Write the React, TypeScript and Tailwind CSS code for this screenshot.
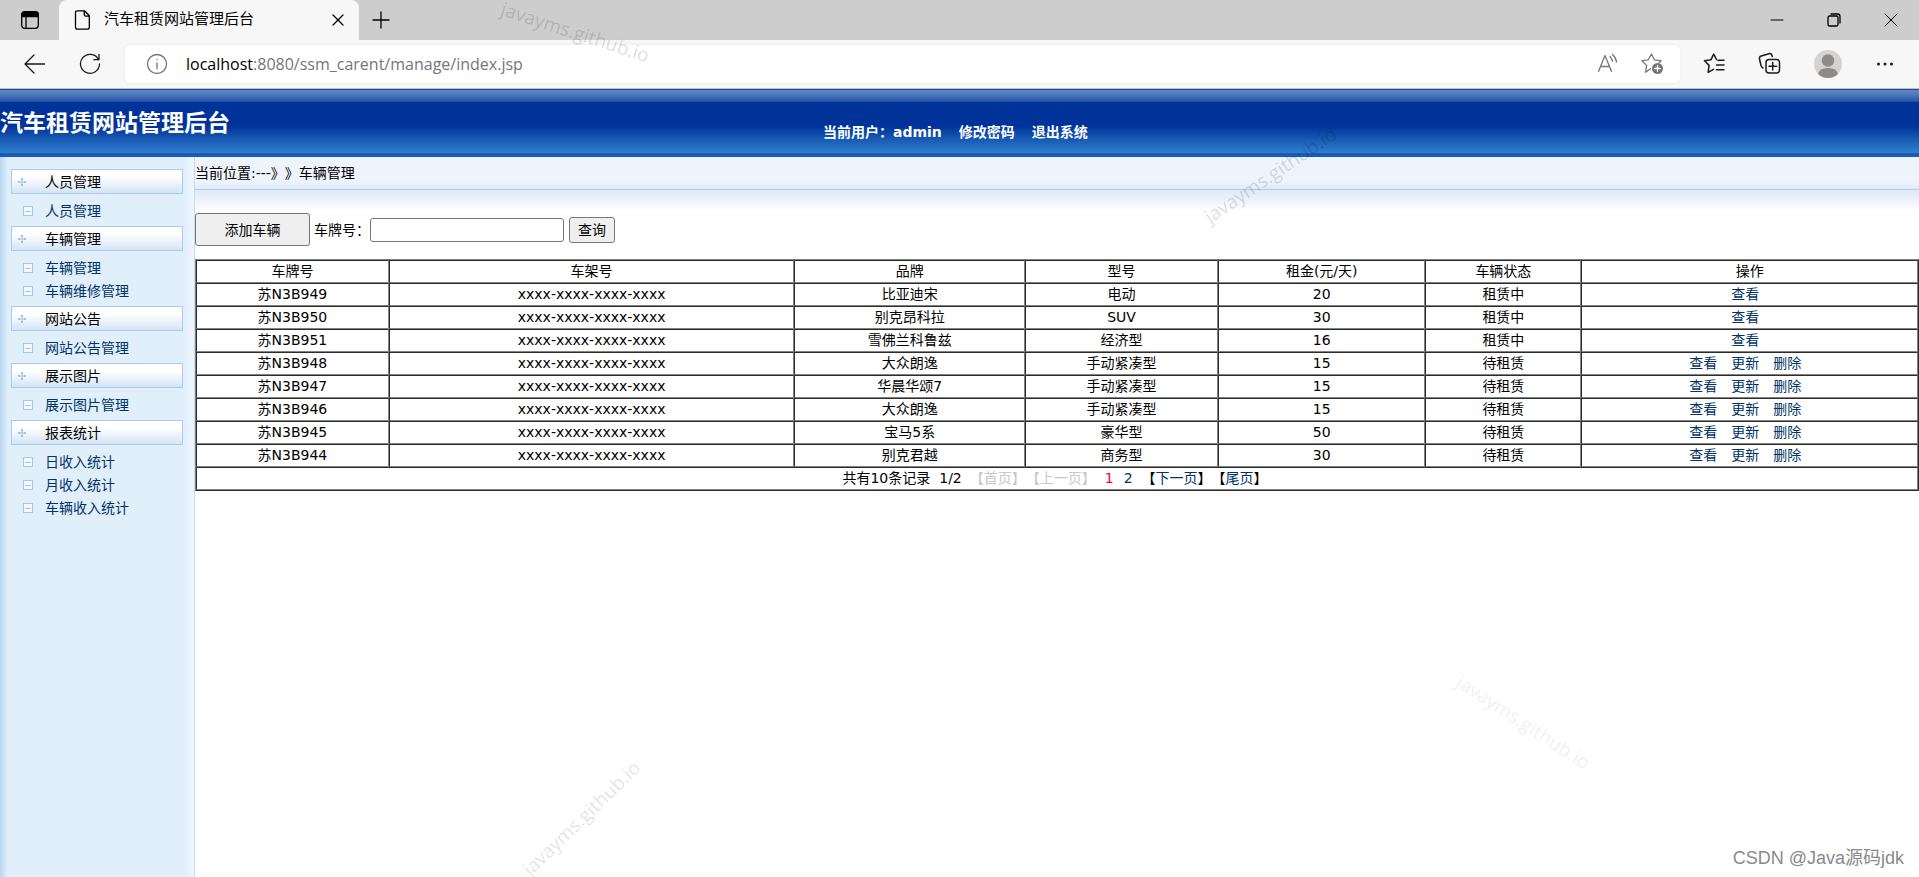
import React from 'react';

type Group = { title: string; items: string[] };

const groups: Group[] = [
  { title: '人员管理', items: ['人员管理'] },
  { title: '车辆管理', items: ['车辆管理', '车辆维修管理'] },
  { title: '网站公告', items: ['网站公告管理'] },
  { title: '展示图片', items: ['展示图片管理'] },
  { title: '报表统计', items: ['日收入统计', '月收入统计', '车辆收入统计'] },
];

const columns = ['车牌号', '车架号', '品牌', '型号', '租金(元/天)', '车辆状态', '操作'];

const cars = [
  { plate: '苏N3B949', brand: '比亚迪宋', model: '电动', rent: 20, rented: true },
  { plate: '苏N3B950', brand: '别克昂科拉', model: 'SUV', rent: 30, rented: true },
  { plate: '苏N3B951', brand: '雪佛兰科鲁兹', model: '经济型', rent: 16, rented: true },
  { plate: '苏N3B948', brand: '大众朗逸', model: '手动紧凑型', rent: 15, rented: false },
  { plate: '苏N3B947', brand: '华晨华颂7', model: '手动紧凑型', rent: 15, rented: false },
  { plate: '苏N3B946', brand: '大众朗逸', model: '手动紧凑型', rent: 15, rented: false },
  { plate: '苏N3B945', brand: '宝马5系', model: '豪华型', rent: 50, rented: false },
  { plate: '苏N3B944', brand: '别克君越', model: '商务型', rent: 30, rented: false },
];

function Svg({ size, className, children }: { size: number; className?: string; children: React.ReactNode }) {
  return (
    <svg
      width={size}
      height={size}
      viewBox={`0 0 ${size} ${size}`}
      fill="none"
      stroke="currentColor"
      strokeWidth="1.3"
      strokeLinecap="round"
      strokeLinejoin="round"
      className={className}
      aria-hidden="true"
    >
      {children}
    </svg>
  );
}

function TabStrip() {
  return (
    <div className="flex h-10 items-stretch bg-[#cdcdcd] text-black">
      <button aria-label="标签页操作" className="flex w-[59px] items-center justify-center">
        <Svg size={20}>
          <rect x="1.7" y="1.7" width="16.6" height="16.6" rx="3" />
          <path d="M2 3.5Q2.5 2 4.500 2h11Q17.500 2 18 3.500V6.500H2z" fill="currentColor" />
          <path d="M6 7v11" />
        </Svg>
      </button>
      <div className="flex w-[300px] items-center rounded-t-lg bg-[#f7f7f7] pr-[13px] pl-[14px]">
        <Svg size={20}>
          <path d="M4.500 0.800h7l4.800 5v11.400q0 2-2 2h-9.800q-2 0-2-2v-14.400q0-2 2-2zM11.200 1v3.500q0 1.600 1.600 1.600h3.300" />
        </Svg>
        <span className="ml-[11px] flex-1 text-[15px]">汽车租赁网站管理后台</span>
        <button aria-label="关闭标签页">
          <Svg size={16}>
            <path d="M3 3l10 10M13 3L3 13" />
          </Svg>
        </button>
      </div>
      <button aria-label="新建标签页" className="flex w-[44px] items-center justify-center">
        <Svg size={20}>
          <path d="M10 2v16M2 10h16" />
        </Svg>
      </button>
      <div className="ml-auto flex">
        <button aria-label="最小化" className="flex w-[57px] items-center justify-center">
          <Svg size={14}>
            <path d="M1 7h12" strokeWidth="1" />
          </Svg>
        </button>
        <button aria-label="还原" className="flex w-[57px] items-center justify-center">
          <Svg size={14}>
            <rect x="1" y="3" width="10" height="10" rx="1.500" />
            <path d="M4 1h6.500q2.500 0 2.500 2.500V10" />
          </Svg>
        </button>
        <button aria-label="关闭" className="flex w-[57px] items-center justify-center">
          <Svg size={14}>
            <path d="M1 1l12 12M13 1L1 13" strokeWidth="1" />
          </Svg>
        </button>
      </div>
    </div>
  );
}

function Toolbar() {
  return (
    <div className="flex h-[49px] items-center border-b border-[#c4c4c4] bg-[#f7f7f7] text-[#1b1b1b]">
      <button aria-label="后退" className="ml-[24px]">
        <Svg size={22}>
          <path d="M20.500 11H1.500M10 2L1 11l9 9" />
        </Svg>
      </button>
      <button aria-label="刷新" className="ml-[33px]">
        <Svg size={22}>
          <path d="M19.300 6.200A9.500 9.500 0 1 0 20.500 11M20 1.500v5.200h-5.200" />
        </Svg>
      </button>
      <div className="ml-[24px] flex h-[38px] flex-1 items-center rounded-md bg-white pr-[15px] pl-[21px] text-[#767676] shadow-[0_0_3px_rgba(0,0,0,0.08)]">
        <Svg size={22}>
          <circle cx="11" cy="11" r="9.500" />
          <path d="M11 9.800v6M11 6.500v0.200" />
        </Svg>
        <span className="ml-[18px] flex-1 font-['Open_Sans','Noto_Sans',sans-serif] text-base">
          <span className="text-black">localhost</span>:8080/ssm_carent/manage/index.jsp
        </span>
        <button aria-label="大声朗读">
          <Svg size={22}>
            <path d="M1.500 18.500L8 2.500l6.500 16M3.800 13.500h8.400M13 3.500q2 2 2.500 4.500M15.500 1.500q3.500 3 4 7.500" />
          </Svg>
        </button>
        <button aria-label="添加到收藏夹" className="ml-[22px]">
          <Svg size={24}>
            <path d="M9.500 16.800l-4.800 3.400 .9-6.800L1 8.700l6.300-.9L10.500 2l2.800 5.800 6.700.9-2 2.300" />
            <circle cx="16.500" cy="16.500" r="5.500" fill="currentColor" stroke="none" />
            <path d="M16.500 13.700v5.600M13.700 16.500h5.600" stroke="#fff" />
          </Svg>
        </button>
      </div>
      <button aria-label="收藏夹" className="ml-[23px]">
        <Svg size={24}>
          <path d="M13.500 7.500L10.700 2.200 8 7.700l-6.500 1.100 4.600 4.600-1 7 5.400-3M15 8.300h6M13.500 13h7.500M13.500 17.700h7.500" strokeWidth="1.500" />
        </Svg>
      </button>
      <button aria-label="集锦" className="ml-[31px]">
        <Svg size={24}>
          <rect x="8" y="7.500" width="13.500" height="13.500" rx="3" strokeWidth="1.500" />
          <path
            d="M14.700 10.500v7.500M11 14.200h7.500M5 16q-1.500-.7-2-2.500L1.500 7q-.5-2.300 1.700-3L11 1.700q2.300-.5 3 1.800l.3 1"
            strokeWidth="1.500"
          />
        </Svg>
      </button>
      <button aria-label="个人资料" className="ml-[32px]">
        <svg width="28" height="28" viewBox="0 0 28 28" aria-hidden="true">
          <circle cx="14" cy="14" r="14" fill="#d5d3d1" />
          <circle cx="14" cy="10.500" r="6.200" fill="#8e8a87" />
          <path d="M4 24q1.500-6 10-6t10 6q-4 4-10 4t-10-4z" fill="#8e8a87" />
        </svg>
      </button>
      <button aria-label="设置及其他" className="mr-[23px] ml-[32px]">
        <Svg size={22}>
          <g fill="currentColor" stroke="none">
            <circle cx="4.500" cy="11" r="1.500" />
            <circle cx="11" cy="11" r="1.500" />
            <circle cx="17.500" cy="11" r="1.500" />
          </g>
        </Svg>
      </button>
    </div>
  );
}

function Banner() {
  return (
    <header className="grid h-[68px] grid-cols-[823px_1fr] border-t border-b-4 border-t-[#0a4da6] border-b-[#1a5cb5] bg-[linear-gradient(#6486c4_0px,#3f68b4_8px,#1f50a6_12px,#003399_12px,#003399_36px,#3080cf_63px)] font-bold text-white">
      <h1 className="pt-[18px] text-[23px] leading-[30px]">汽车租赁网站管理后台</h1>
      <nav className="flex items-center gap-[17px] pt-[21px] text-sm">
        <span>当前用户：admin</span>
        <a href="#password">修改密码</a>
        <a href="#logout">退出系统</a>
      </nav>
    </header>
  );
}

function Sidebar() {
  return (
    <aside className="w-[195px] shrink-0 border-r border-[#c5dcf0] bg-[linear-gradient(90deg,#b9d6f2_0px,#e1effb_8px,#e1effb_184px,#eef6fd_194px)] pt-3 pr-[11px] pl-[11px]">
      {groups.map((group) => (
        <section key={group.title} className="pb-1">
          <h2 className="flex h-[25px] items-center border border-[#a9cbee] bg-[linear-gradient(#ffffff_30%,#d3e4f5)] pl-[6px]">
            <svg width="8" height="8" viewBox="0 0 8 8" fill="#a3c3e4" aria-hidden="true">
              <path d="M3 0h2v2H3zM0 3h2v2H0zM6 3h2v2H6zM3 6h2v2H3zM3.500 2h1v4h-1zM2 3.500h4v1H2z" />
            </svg>
            <span className="ml-[19px]">{group.title}</span>
          </h2>
          <ul className="pt-[5px] text-[#003366]">
            {group.items.map((item) => (
              <li key={item} className="flex h-[23px] items-center pl-3">
                <svg width="10" height="10" viewBox="0 0 10 10" fill="none" stroke="#a3c8ea" aria-hidden="true">
                  <rect x="0.500" y="0.500" width="9" height="9" fill="#f4f9fe" />
                  <path d="M2 5.500h6" />
                </svg>
                <a href="#menu" className="ml-3">
                  {item}
                </a>
              </li>
            ))}
          </ul>
        </section>
      ))}
    </aside>
  );
}

const cell =
  'h-[23px] border border-t-[#2c2c2c] border-r-[#808080] border-b-[#808080] border-l-[#2c2c2c] p-0 font-normal leading-[21px]';

function CarTable() {
  return (
    <table className="mt-[13px] w-full table-fixed border-separate border-spacing-0 border border-t-[#808080] border-r-[#2c2c2c] border-b-[#2c2c2c] border-l-[#808080] text-center">
      <colgroup>
        <col className="w-[11.2%]" />
        <col className="w-[23.55%]" />
        <col className="w-[13.4%]" />
        <col className="w-[11.2%]" />
        <col className="w-[12.05%]" />
        <col className="w-[9.05%]" />
        <col />
      </colgroup>
      <thead>
        <tr>
          {columns.map((name) => (
            <th key={name} scope="col" className={cell}>
              {name}
            </th>
          ))}
        </tr>
      </thead>
      <tbody>
        {cars.map((car) => (
          <tr key={car.plate}>
            <td className={cell}>{car.plate}</td>
            <td className={cell}>xxxx-xxxx-xxxx-xxxx</td>
            <td className={cell}>{car.brand}</td>
            <td className={cell}>{car.model}</td>
            <td className={cell}>{car.rent}</td>
            <td className={cell}>{car.rented ? '租赁中' : '待租赁'}</td>
            <td className={cell}>
              <div className="flex justify-center gap-[14px] pr-[9px] text-[#003366]">
                <a href="#view">查看</a>
                {!car.rented && <a href="#update">更新</a>}
                {!car.rented && <a href="#delete">删除</a>}
              </div>
            </td>
          </tr>
        ))}
        <tr>
          <td colSpan={7} className={cell}>
            <div className="flex justify-center pr-1 [text-spacing-trim:space-all]">
              <span>共有10条记录</span>
              <span className="ml-[9px]">1/2</span>
              <span className="ml-2 text-[#c8c8c8]">【首页】【上一页】</span>
              <span className="ml-[9px] text-[#ff0033]">1</span>
              <a href="#page2" className="ml-[10px] text-[#003366]">
                2
              </a>
              <span className="ml-[9px]">
                【
                <a href="#next" className="text-[#003366]">
                  下一页
                </a>
                】【
                <a href="#last" className="text-[#003366]">
                  尾页
                </a>
                】
              </span>
            </div>
          </td>
        </tr>
      </tbody>
    </table>
  );
}

function Content() {
  return (
    <main className="min-w-0 flex-1 bg-[linear-gradient(#eff3fc_0px,#eff3fc_24px,#e2ebf7_32px,#a9cbee_32px,#a9cbee_33px,#e0e9f6_33px,#eef2fd_44px,#ffffff_54px)]">
      <div className="flex h-8 items-center [text-spacing-trim:space-all]">当前位置:---》》车辆管理</div>
      <form className="flex items-center pt-6" onSubmit={(e) => e.preventDefault()}>
        <button type="button" className="h-[33px] w-[115px] rounded-[3px] border border-[#767676] bg-[#efefef]">
          添加车辆
        </button>
        <label htmlFor="plate" className="ml-1">
          车牌号：
        </label>
        <input id="plate" type="text" className="h-6 w-[194px] rounded-[3px] border border-[#767676] bg-white px-1" />
        <button type="submit" className="ml-[5px] h-[26px] w-[46px] rounded-[3px] border border-[#767676] bg-[#efefef]">
          查询
        </button>
      </form>
      <CarTable />
    </main>
  );
}

function Watermarks() {
  const mark = "absolute whitespace-nowrap font-['Open_Sans','Noto_Sans',sans-serif] text-[19px] leading-6";
  return (
    <div className="pointer-events-none absolute inset-0 overflow-hidden">
      <span className={`${mark} top-[20px] left-[498px] rotate-[18deg] text-black/15`}>javayms.github.io</span>
      <span className={`${mark} top-[163px] left-[1193px] rotate-[-34deg] text-black/15`}>javayms.github.io</span>
      <span className={`${mark} top-[806px] left-[504px] rotate-[-44deg] text-black/12`}>javayms.github.io</span>
      <span className={`${mark} top-[710px] left-[1446px] rotate-[33deg] text-black/8`}>javayms.github.io</span>
      <span className="absolute right-[15px] bottom-[5px] font-['Liberation_Sans','Noto_Sans_CJK_SC',sans-serif] text-[18px] text-[#8a8a8a]">
        CSDN @Java源码jdk
      </span>
    </div>
  );
}

export default function App() {
  return (
    <div className="relative flex min-h-screen flex-col bg-white font-['DejaVu_Sans','Noto_Sans_CJK_SC',sans-serif] text-sm text-black">
      <TabStrip />
      <Toolbar />
      <Banner />
      <div className="flex flex-1">
        <Sidebar />
        <Content />
      </div>
      <Watermarks />
    </div>
  );
}
